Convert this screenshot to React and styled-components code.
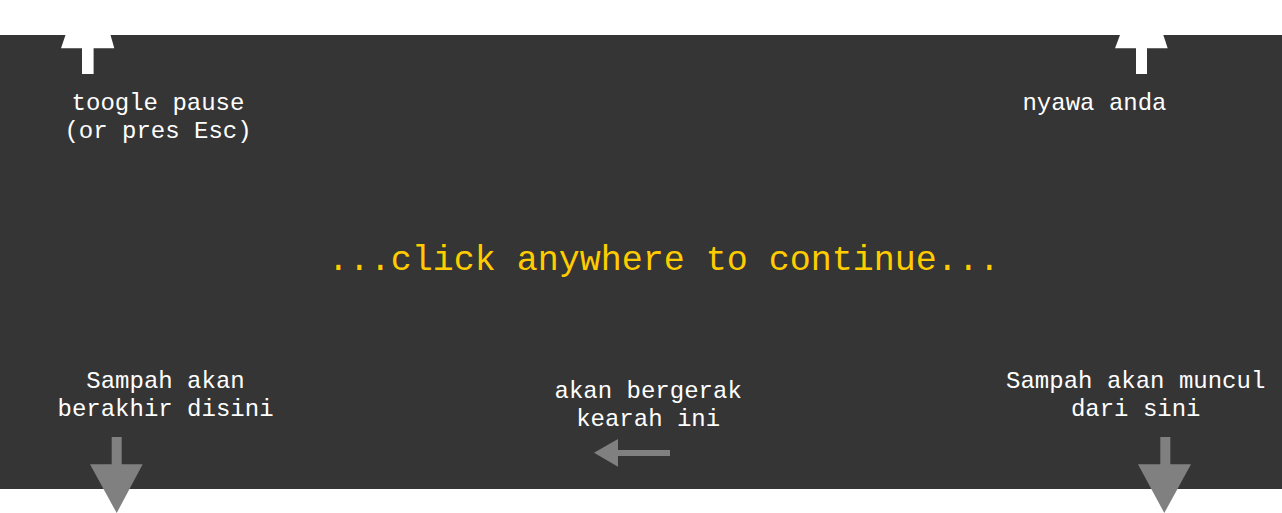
import React from 'react'
import styled, { createGlobalStyle } from 'styled-components'

const Global = createGlobalStyle`
  html, body {
    margin: 0;
    padding: 0;
    background: #ffffff;
  }
  body {
    font-family: "Liberation Mono", "Courier New", monospace;
    overflow: hidden;
  }
`;

export default function App() {
  return (
    <>
      <Global />
      <Page>
        <Panel>
          <TopRow>
            <Label>{'toogle pause\n(or pres Esc)'}</Label>
            <Label>nyawa anda</Label>
          </TopRow>
          <Continue>...click anywhere to continue...</Continue>
          <BottomRow>
            <Label>{'Sampah akan\nberakhir disini'}</Label>
            <Label $shift>{'akan bergerak\nkearah ini'}</Label>
            <Label $end>{'Sampah akan muncul\ndari sini'}</Label>
          </BottomRow>

          {/* hint arrows, they hang over the panel edges */}
          <Arrow $left={60.7} $top={0} width="54" height="39" viewBox="0 0 54 39">
            <polygon points="4.5,0 49.5,0 53.3,13.3 0,13.3" fill="#fff" />
            <rect x="21" y="13" width="11.6" height="26" fill="#fff" />
          </Arrow>
          <Arrow $left={1115} $top={0} width="53" height="39" viewBox="0 0 53 39">
            <polygon points="5,0 48.3,0 52.7,13.3 0,13.3" fill="#fff" />
            <rect x="21" y="13" width="11" height="26" fill="#fff" />
          </Arrow>
          <Arrow $left={90} $top={401.7} width="53" height="77" viewBox="0 0 53 77">
            <rect x="21.7" y="0" width="10" height="28" fill="#808080" />
            <polygon points="0,27.3 52.7,27.3 26.7,76" fill="#808080" />
          </Arrow>
          <Arrow $left={1137.7} $top={401.7} width="53" height="77" viewBox="0 0 53 77">
            <rect x="22.3" y="0" width="10" height="28" fill="#808080" />
            <polygon points="0,27.3 53,27.3 26.3,76" fill="#808080" />
          </Arrow>
          <Arrow $left={594} $top={404} width="76" height="28" viewBox="0 0 76 28">
            <polygon points="0,13.7 24,0 24,27.7" fill="#808080" />
            <rect x="23" y="11" width="53" height="6" fill="#808080" />
          </Arrow>
        </Panel>
      </Page>
    </>
  )
}

const Page = styled.div`
  padding-top: 35px;
  height: 478px;
`;

const Panel = styled.div`
  position: relative;
  display: flex;
  flex-direction: column;
  height: 454px;
  background: #353535;
  color: #ffffff;
`;

const TopRow = styled.div`
  display: flex;
  justify-content: space-between;
  align-items: flex-start;
  padding: 55px 115.5px 0 64.4px;
`;

const Label = styled.div`
  white-space: pre;
  text-align: center;
  font-size: 24px;
  line-height: 28px;
  margin-top: ${p => (p.$shift ? '9.5px' : '0')};
  margin-left: ${p => (p.$shift ? '281px' : p.$end ? 'auto' : '0')};
`;

const Continue = styled.div`
  margin-top: 94.5px;
  padding-left: 45.6px;
  text-align: center;
  font-size: 35px;
  line-height: 40px;
  color: #ffcc00;
`;

const BottomRow = styled.div`
  display: flex;
  align-items: flex-start;
  margin-top: 87.7px;
  padding: 0 16.7px 0 57.5px;
`;

const Arrow = styled.svg`
  position: absolute;
  left: ${p => p.$left}px;
  top: ${p => p.$top}px;
  display: block;
  overflow: visible;
`;
